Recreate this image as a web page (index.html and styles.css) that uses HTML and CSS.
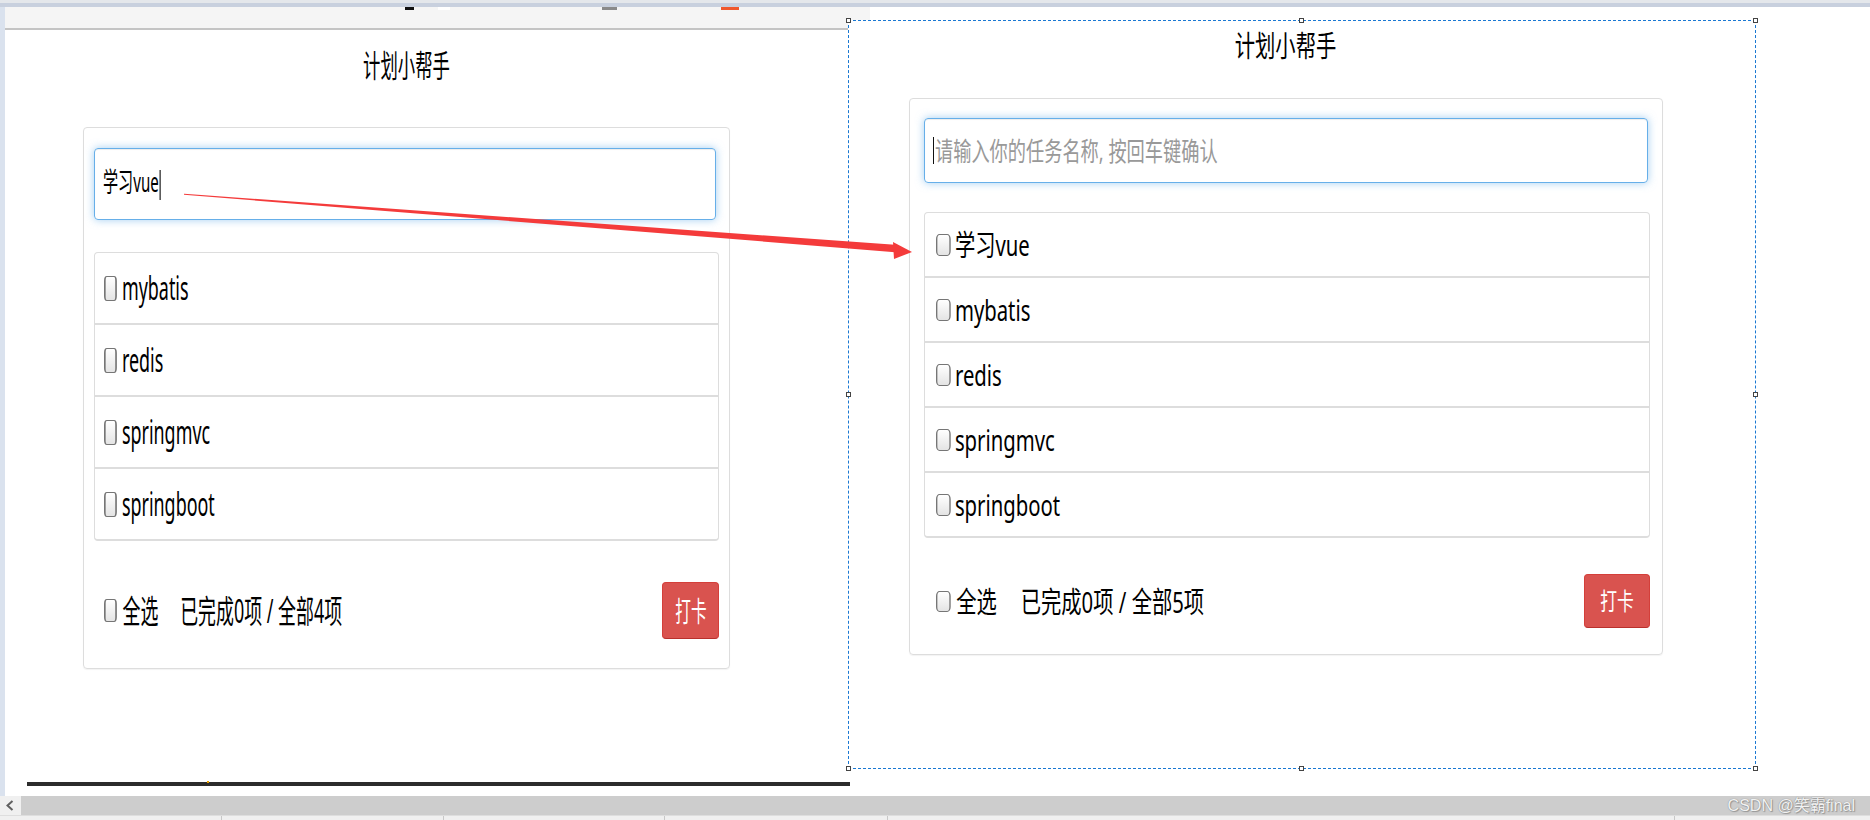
FILE: index.html
```html
<!DOCTYPE html>
<html lang="zh-CN">
<head>
  <meta charset="UTF-8" />
  <title>计划小帮手</title>
  <link rel="stylesheet" href="styles.css">
</head>
<body>
  <div class="topbar"></div>

  <div class="desk">
    <div class="side"></div>

    <!-- 左：输入中 -->
    <div class="pane pane-left">
      <div class="toolbar">
        <span class="mark mark-a"></span>
        <span class="mark mark-b"></span>
        <span class="mark mark-c"></span>
        <span class="mark mark-d"></span>
      </div>

      <div class="app">
        <h1 class="title"><span class="sq">计划小帮手</span></h1>
        <div class="panel">
          <div class="task-input"><span class="sq">学习vue<span class="caret"></span></span></div>
          <ul class="list">
            <li class="item"><label class="sq opt"><input type="checkbox" class="check"><span>mybatis</span></label></li>
            <li class="item"><label class="sq opt"><input type="checkbox" class="check"><span>redis</span></label></li>
            <li class="item"><label class="sq opt"><input type="checkbox" class="check"><span>springmvc</span></label></li>
            <li class="item"><label class="sq opt"><input type="checkbox" class="check"><span>springboot</span></label></li>
          </ul>
          <div class="footer">
            <label class="sq opt"><input type="checkbox" class="check"><span>全选</span><span class="count">已完成0项 / 全部4项</span></label>
            <button class="btn-punch"><span class="sq">打卡</span></button>
          </div>
        </div>
      </div>

      <div class="darkbar"><span class="dot"></span></div>
    </div>

    <!-- 右：回车之后 -->
    <div class="pane pane-right">
      <span class="handle h-tl"></span>
      <span class="handle h-tm"></span>
      <span class="handle h-tr"></span>
      <span class="handle h-ml"></span>
      <span class="handle h-mr"></span>
      <span class="handle h-bl"></span>
      <span class="handle h-bm"></span>
      <span class="handle h-br"></span>

      <div class="app">
        <h1 class="title"><span class="sq">计划小帮手</span></h1>
        <div class="panel">
          <div class="task-input"><span class="caret"></span><span class="sq placeholder">请输入你的任务名称, 按回车键确认</span></div>
          <ul class="list">
            <li class="item"><label class="sq opt"><input type="checkbox" class="check"><span>学习vue</span></label></li>
            <li class="item"><label class="sq opt"><input type="checkbox" class="check"><span>mybatis</span></label></li>
            <li class="item"><label class="sq opt"><input type="checkbox" class="check"><span>redis</span></label></li>
            <li class="item"><label class="sq opt"><input type="checkbox" class="check"><span>springmvc</span></label></li>
            <li class="item"><label class="sq opt"><input type="checkbox" class="check"><span>springboot</span></label></li>
          </ul>
          <div class="footer">
            <label class="sq opt"><input type="checkbox" class="check"><span>全选</span><span class="count">已完成0项 / 全部5项</span></label>
            <button class="btn-punch"><span class="sq">打卡</span></button>
          </div>
        </div>
      </div>
    </div>
  </div>

  <div class="scrollbar">
    <div class="scroll-btn">
      <svg width="21" height="19" viewBox="0 0 21 19"><polyline points="12.5,5 7.5,9.5 12.5,14" fill="none" stroke="#606060" stroke-width="2"/></svg>
    </div>
    <span class="watermark">CSDN @笑霸final</span>
  </div>
  <div class="statusbar">
    <span class="seg s1"></span>
    <span class="seg s2"></span>
    <span class="seg s3"></span>
    <span class="seg s4"></span>
    <span class="seg s5"></span>
  </div>

  <svg class="arrow" width="1870" height="820" viewBox="0 0 1870 820">
    <polygon points="184,193.8 895,244.8 895,252.2 184,194.8" fill="#f43b3b"/>
    <polygon points="893,242 912,252 894,259" fill="#f43b3b"/>
  </svg>
</body>
</html>
```

FILE: styles.css
```css
* {
  box-sizing: border-box;
}

body {
  margin: 0;
  width: 1870px;
  height: 820px;
  overflow: hidden;
  position: relative;
  background: #fff;
  color: #000;
  font-family: "Noto Sans", "Noto Sans CJK SC", sans-serif;
}

.topbar {
  height: 7px;
  background: #c8d0de;
  border-top: 3px solid #e4e7eb;
}

.desk {
  display: flex;
  height: 789px;
}

.side {
  flex: none;
  width: 5px;
  background: #dae2ee;
}

/* 截图被横向压扁了，文字一起压 */
.sq {
  display: inline-block;
  white-space: nowrap;
  transform: scaleX(var(--sx));
  transform-origin: 0 50%;
}

.opt {
  display: inline-flex;
  align-items: center;
}

.pane-left {
  --sx: 0.56;
  flex: none;
  width: 843px;
  display: flex;
  flex-direction: column;
}

.toolbar {
  flex: none;
  width: 865px;
  height: 23px;
  display: flex;
  align-items: flex-start;
  background: #f5f5f5;
  border-bottom: 2px solid #c4c4c4;
}

.mark {
  height: 3px;
}

.mark-a { margin-left: 400px; width: 9px; background: #111; }
.mark-b { margin-left: 24px; width: 12px; background: #fff; }
.mark-c { margin-left: 152px; width: 15px; background: #8a8a8a; }
.mark-d { margin-left: 104px; width: 18px; background: #f0582c; }

.title {
  margin: 0;
  font-weight: normal;
  text-align: center;
}

.title .sq {
  transform-origin: 50% 50%;
}

.panel {
  border: 1px solid #ddd;
  border-radius: 4px;
  box-shadow: 0 1px 1px rgba(0, 0, 0, 0.05);
}

.task-input {
  display: flex;
  align-items: center;
  border: 1px solid #66afe9;
  border-radius: 4px;
  box-shadow: inset 0 1px 1px rgba(0, 0, 0, 0.075), 0 0 8px rgba(102, 175, 233, 0.6);
  line-height: 1;
}

.caret {
  display: inline-block;
  width: 2px;
  background: #111;
  vertical-align: middle;
}

.placeholder {
  color: #999;
}

.list {
  list-style: none;
  margin: 0;
  padding: 0;
  border: 1px solid #ddd;
  border-bottom-width: 2px;
  border-radius: 4px;
}

.item {
  display: flex;
  align-items: center;
  border-bottom: 2px solid #ddd;
  line-height: 1;
}

.item:last-child {
  border-bottom: none;
}

.check {
  appearance: none;
  flex: none;
  margin: 0;
  border-style: solid;
  border-color: #767676;
  border-width: 1.5px 3px;
  border-radius: 5px;
  background: linear-gradient(#fff, #e4e4e4);
}

.footer {
  display: flex;
  justify-content: space-between;
  align-items: center;
  line-height: 1;
}

.btn-punch {
  display: flex;
  align-items: center;
  justify-content: center;
  padding: 0;
  font-family: inherit;
  color: #fff;
  background: #d9534f;
  border: 1px solid #d43f3a;
  border-bottom-color: #b9302c;
  border-radius: 4px;
  line-height: 1;
}

.btn-punch .sq {
  transform-origin: 50% 50%;
}

/* 左侧尺寸 */
.pane-left .app {
  width: 647px;
  margin: 20px 0 0 78px;
}

.pane-left .title {
  font-size: 31px;
  line-height: 31px;
}

.pane-left .panel {
  margin-top: 46px;
  padding: 20px 10px 29px;
}

.pane-left .task-input {
  height: 72px;
  margin-right: 3px;
  padding-left: 8px;
  font-size: 27px;
}

.pane-left .caret {
  height: 30px;
  margin-left: 1px;
}

.pane-left .list {
  margin-top: 32px;
}

.pane-left .item {
  height: 72px;
  padding-left: 9px;
  font-size: 32px;
}

.pane-left .item:last-child {
  height: 70px;
}

.pane-left .check {
  width: 23px;
  height: 25px;
  margin-right: 9px;
}

.pane-left .footer {
  margin-top: 41px;
  padding-left: 10px;
  font-size: 32px;
}

.pane-left .footer .check {
  height: 23px;
  margin-right: 10px;
}

.pane-left .count {
  margin-left: 39px;
}

.pane-left .btn-punch {
  width: 57px;
  height: 57px;
  font-size: 28px;
}

.darkbar {
  flex: none;
  position: relative;
  width: 823px;
  height: 4px;
  margin: auto 0 10px 22px;
  background: #2c2c2c;
}

.dot {
  position: absolute;
  left: 180px;
  top: -1px;
  width: 2px;
  height: 2px;
  background: #e8a000;
}

/* 右侧：选中框 */
.pane-right {
  --sx: 0.70;
  position: relative;
  flex: none;
  width: 908px;
  height: 749px;
  margin-top: 13px;
  background: #fff;
  border: 1px dashed #1a78d2;
}

.handle {
  position: absolute;
  width: 5px;
  height: 5px;
  background: #fff;
  border: 1px solid #444;
}

.h-tl { left: -3px; top: -3px; }
.h-tm { left: calc(50% - 3px); top: -3px; }
.h-tr { right: -3px; top: -3px; }
.h-ml { left: -3px; top: calc(50% - 3px); }
.h-mr { right: -3px; top: calc(50% - 3px); }
.h-bl { left: -3px; bottom: -3px; }
.h-bm { left: calc(50% - 3px); bottom: -3px; }
.h-br { right: -3px; bottom: -3px; }

.pane-right .app {
  width: 754px;
  margin: 10px 0 0 60px;
}

.pane-right .title {
  font-size: 29px;
  line-height: 29px;
}

.pane-right .panel {
  margin-top: 38px;
  padding: 19px 12px 26px 14px;
}

.pane-right .task-input {
  height: 65px;
  margin-right: 2px;
  padding-left: 8px;
  font-size: 26px;
}

.pane-right .caret {
  width: 1px;
  height: 27px;
  margin-right: 1px;
}

.pane-right .list {
  margin-top: 29px;
}

.pane-right .item {
  height: 65px;
  padding-left: 11px;
  font-size: 29px;
}

.pane-right .item:last-child {
  height: 63px;
}

.pane-right .check {
  width: 21px;
  height: 22px;
  margin-right: 6px;
  border-width: 1.5px 2.5px;
}

.pane-right .footer {
  margin-top: 36px;
  padding-left: 12px;
  font-size: 29px;
}

.pane-right .footer .check {
  height: 21px;
  margin-right: 8px;
}

.pane-right .count {
  margin-left: 34px;
}

.pane-right .btn-punch {
  width: 66px;
  height: 54px;
  font-size: 24px;
}

/* 底部滚动条 */
.scrollbar {
  display: flex;
  align-items: center;
  height: 19px;
  background: #cdcdcd;
}

.scroll-btn {
  display: flex;
  width: 21px;
  height: 19px;
  background: #f0f0f0;
}

.watermark {
  margin-left: auto;
  margin-right: 15px;
  font-family: "Liberation Sans", "Noto Sans CJK SC", sans-serif;
  font-size: 16px;
  line-height: 1;
  color: #f2f2f2;
  text-shadow: 0 0 1px #777, 1px 1px 1px #999;
}

.statusbar {
  display: flex;
  height: 5px;
  background: #f0f0f0;
  border-top: 1px solid #dedede;
}

.seg {
  border-right: 1px solid #c8c8c8;
}

.s1 { width: 222px; }
.s2 { width: 222px; }
.s3 { width: 221px; }
.s4 { width: 223px; }
.s5 { width: 787px; }

.arrow {
  position: absolute;
  left: 0;
  top: 0;
  pointer-events: none;
}
```
